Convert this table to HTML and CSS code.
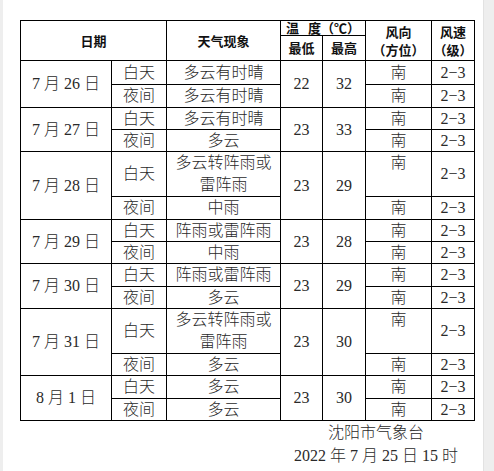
FILE: index.html
```html
<!DOCTYPE html>
<html lang="zh-CN">
<head>
<meta charset="utf-8">
<title>沈阳天气预报</title>
<link rel="stylesheet" href="styles.css">
</head>
<body>
<div class="page">
  <table class="forecast">
    <colgroup>
      <col class="c-date"><col class="c-period"><col class="c-weather"><col class="c-low"><col class="c-high"><col class="c-dir"><col class="c-speed">
    </colgroup>
    <thead>
      <tr class="h1">
        <th rowspan="2" colspan="2">日期</th>
        <th rowspan="2">天气现象</th>
        <th colspan="2">温&nbsp;&nbsp;&nbsp;度（℃）</th>
        <th rowspan="2" class="stack"><span>风向</span><span>（方位）</span></th>
        <th rowspan="2" class="stack"><span>风速</span><span>（级）</span></th>
      </tr>
      <tr class="h2">
        <th>最低</th>
        <th>最高</th>
      </tr>
    </thead>
    <tbody>
      <tr class="r24"><td rowspan="2">7 月 26 日</td><td>白天</td><td>多云有时晴</td><td rowspan="2">22</td><td rowspan="2">32</td><td>南</td><td>2−3</td></tr>
      <tr class="r23"><td>夜间</td><td>多云有时晴</td><td>南</td><td>2−3</td></tr>

      <tr class="r22"><td rowspan="2">7 月 27 日</td><td>白天</td><td>多云有时晴</td><td rowspan="2">23</td><td rowspan="2">33</td><td>南</td><td>2−3</td></tr>
      <tr class="r22"><td>夜间</td><td>多云</td><td>南</td><td>2−3</td></tr>

      <tr class="r44"><td rowspan="2">7 月 28 日</td><td>白天</td><td class="two"><span>多云转阵雨或</span><span>雷阵雨</span></td><td rowspan="2">23</td><td rowspan="2">29</td><td class="top">南</td><td>2−3</td></tr>
      <tr class="r23"><td>夜间</td><td>中雨</td><td>南</td><td>2−3</td></tr>

      <tr class="r22"><td rowspan="2">7 月 29 日</td><td>白天</td><td>阵雨或雷阵雨</td><td rowspan="2">23</td><td rowspan="2">28</td><td>南</td><td>2−3</td></tr>
      <tr class="r22"><td>夜间</td><td>中雨</td><td>南</td><td>2−3</td></tr>

      <tr class="r23"><td rowspan="2">7 月 30 日</td><td>白天</td><td>阵雨或雷阵雨</td><td rowspan="2">23</td><td rowspan="2">29</td><td>南</td><td>2−3</td></tr>
      <tr class="r22"><td>夜间</td><td>多云</td><td>南</td><td>2−3</td></tr>

      <tr class="r44"><td rowspan="2">7 月 31 日</td><td>白天</td><td class="two"><span>多云转阵雨或</span><span>雷阵雨</span></td><td rowspan="2">23</td><td rowspan="2">30</td><td class="top">南</td><td>2−3</td></tr>
      <tr class="r22"><td>夜间</td><td>多云</td><td>南</td><td>2−3</td></tr>

      <tr class="r23"><td rowspan="2">8 月 1 日</td><td>白天</td><td>多云</td><td rowspan="2">23</td><td rowspan="2">30</td><td>南</td><td>2−3</td></tr>
      <tr class="r22"><td>夜间</td><td>多云</td><td>南</td><td>2−3</td></tr>
    </tbody>
  </table>
  <div class="sign">
    <p>沈阳市气象台</p>
    <p>2022 年 7 月 25 日 15 时</p>
  </div>
</div>
</body>
</html>
```

FILE: styles.css
```css
html {
  background: #eeeeee;
}
body {
  margin: 0;
  font-family: "Liberation Serif", "Noto Sans CJK SC", serif;
  color: #2a2a2a;
}
.page {
  margin-left: 3px;
  width: 481px;
  height: 471px;
  background: #ffffff;
  border-right: 1px solid #e2e2e2;
  padding: 20px 0 0 17px;
  box-sizing: border-box;
}
.forecast {
  border-collapse: collapse;
  table-layout: fixed;
  width: 455px;
  font-size: 16px;
  font-weight: 300;
}
.c-date { width: 91px; }
.c-period { width: 55px; }
.c-weather { width: 114px; }
.c-low { width: 42px; }
.c-high { width: 43px; }
.c-dir { width: 66px; }
.c-speed { width: 43px; }

.forecast th,
.forecast td {
  border: 1px solid #000;
  padding: 0;
  text-align: center;
  vertical-align: middle;
  white-space: nowrap;
}
.forecast th {
  font-family: "Noto Sans CJK SC", sans-serif;
  font-weight: 700;
  font-size: 13px;
  line-height: 18px;
  color: #111;
}
.forecast th.stack span,
.forecast td.two span {
  display: block;
}
.forecast th.stack span {
  height: 18px;
  line-height: 18px;
  overflow: hidden;
}
.h1 { height: 15px; }
.h1 th { line-height: 14px; }
.h2 { height: 25px; }
.forecast td {
  line-height: 20px;
}
.r22 { height: 22px; }
.r23 { height: 23px; }
.r24 { height: 24px; }
.r44 { height: 44px; }
.forecast td.two span {
  height: 22px;
  line-height: 22px;
}
.forecast td.top {
  vertical-align: top;
  line-height: 22px;
}
.sign {
  width: 200px;
  margin-left: 256px;
  text-align: center;
  font-size: 16px;
  font-weight: 300;
  line-height: 23px;
}
.sign p {
  margin: 0;
}
```
